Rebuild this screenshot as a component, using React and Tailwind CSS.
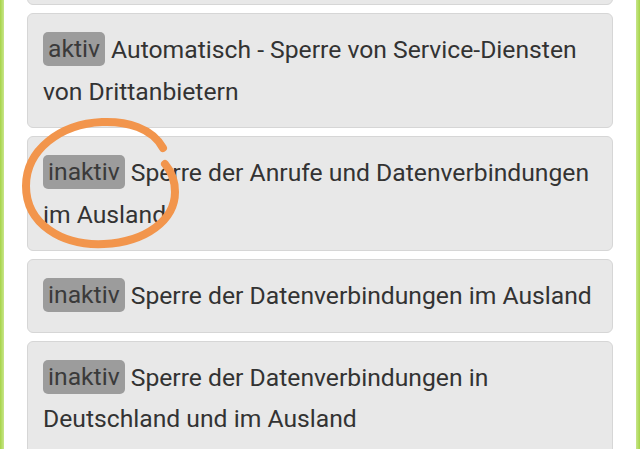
import React from "react";

const items = [
  { status: "aktiv", text: "Automatisch - Sperre von Service-Diensten von Drittanbietern" },
  { status: "inaktiv", text: "Sperre der Anrufe und Datenverbindungen im Ausland", circle: true },
  { status: "inaktiv", text: "Sperre der Datenverbindungen im Ausland" },
  { status: "inaktiv", text: "Sperre der Datenverbindungen in Deutschland und im Ausland" },
];

function Card({ status, text, circle }) {
  return (
    <div className="relative rounded-[6px] border border-[#d6d6d6] bg-[#e8e8e8] p-[15px] text-[24.7px] leading-[41.5px] text-[#333]">
      <span className="inline-block rounded-[5px] bg-[#9c9c9c] px-[5px] align-[1px] leading-[34px] text-[#3a3a3a]">
        {status}
      </span>{" "}
      {text}
      {circle && (
        <svg
          className="pointer-events-none absolute left-[-6px] top-[-17px] overflow-visible"
          width="160"
          height="140"
          viewBox="0 0 160 140"
          fill="none"
        >
          <path
            d="M141 28 C130 8 105 1 80 2 C38 4 4 30 4 66 C4 104 40 126 82 124 C124 122 153 100 153 72 C153 60 149 51 143 44"
            stroke="#f2954c"
            strokeWidth="8"
            strokeLinecap="round"
            strokeLinejoin="round"
          />
        </svg>
      )}
    </div>
  );
}

export default function App() {
  return (
    <div
      className="h-[449px] w-[640px] overflow-hidden bg-white"
      style={{ fontFamily: "Roboto, 'Liberation Sans', sans-serif" }}
    >
      <div className="flex h-full">
        <div className="w-[4px] bg-gradient-to-r from-[#a6d445] to-[#c8e68a]" />
        <div className="flex-1 px-[23px]">
          <div className="flex flex-col gap-[8px]">
            <div className="-mt-[68px] h-[73px] rounded-[6px] border border-[#d6d6d6] bg-[#e8e8e8]" />
            {items.map((it, i) => (
              <Card key={i} {...it} />
            ))}
          </div>
        </div>
        <div className="w-[4px] bg-gradient-to-r from-[#c8e68a] to-[#a6d445]" />
      </div>
    </div>
  );
}
